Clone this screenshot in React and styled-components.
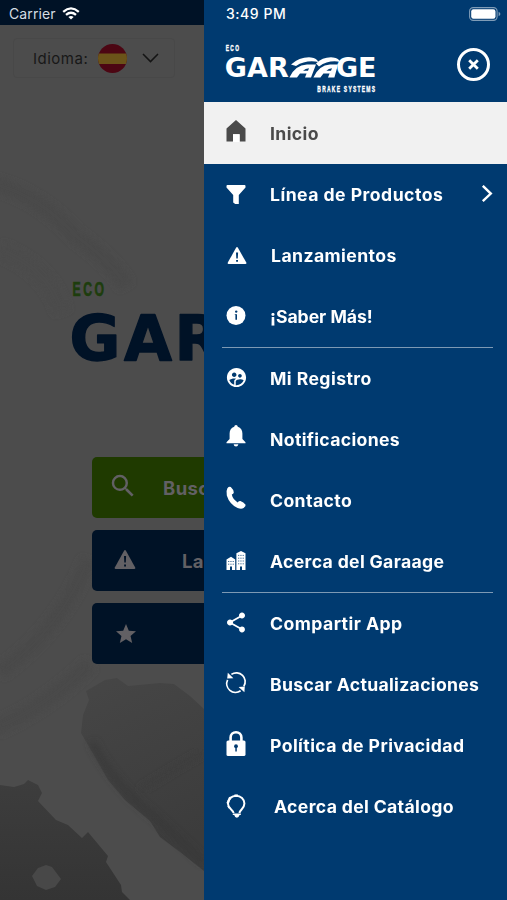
import React from 'react';
import styled, { createGlobalStyle } from 'styled-components';
import { MdSupervisedUserCircle, MdShare, MdSearch, MdStar } from 'react-icons/md';

const GlobalStyle = createGlobalStyle`
  * {
    box-sizing: border-box;
  }

  body {
    margin: 0;
    font-family: 'Inter', 'Open Sans', sans-serif;
  }
`;

const Screen = styled.div`
  position: relative;
  width: 507px;
  height: 900px;
  overflow: hidden;
  background: #4c4c4c;
`;

/* status bar */

const StatusBar = styled.div`
  position: absolute;
  top: 0;
  left: 0;
  z-index: 3;
  display: grid;
  grid-template-columns: 217px 1fr auto;
  align-items: center;
  width: 100%;
  height: 27px;
  padding: 0 6px 0 9px;
  color: #fff;
  font-size: 14px;
  font-weight: 500;
`;

const Carrier = styled.div`
  display: flex;
  align-items: center;
  gap: 6px;
  color: #d5dde3;
  font-weight: 400;
  letter-spacing: 0.1px;
`;

const Clock = styled.div`
  letter-spacing: 0.55px;
`;

/* dimmed home screen */

const Home = styled.div`
  position: relative;
  height: 100%;
  display: flex;
  flex-direction: column;
  width: 204px;
  overflow: hidden;
`;

const HomeTop = styled.div`
  height: 25px;
  flex: none;
  background: #001226;
`;

const Backdrop = styled.svg`
  position: absolute;
  top: 0;
  left: 0;
`;

const Language = styled.div`
  position: relative;
  display: flex;
  align-items: center;
  width: 162px;
  height: 40px;
  margin: 13px 0 0 13px;
  padding-left: 19px;
  border: 1px solid #484848;
  border-radius: 4px;
  color: #181818;
  font-size: 15px;
  letter-spacing: 0.5px;

  .flag {
    margin-left: 10px;
  }

  .chevron {
    margin-left: 15px;
  }
`;

const HomeLogo = styled.svg`
  position: relative;
  flex: none;
  margin: 200px 0 0 70px;
`;

const HomeButtons = styled.div`
  position: relative;
  display: flex;
  flex-direction: column;
  gap: 12px;
  width: 323px;
  margin: 83px 0 0 92px;
`;

const HomeButton = styled.div`
  display: flex;
  align-items: center;
  height: 61px;
  padding-left: ${props => props.pad || 21}px;
  border-radius: 5px;
  background: ${props => props.color};
  color: #626064;
  font-size: 18.5px;
  font-weight: 700;
  letter-spacing: 0.4px;

  svg {
    margin-bottom: ${props => props.lift || 0}px;
  }

  span {
    margin-left: ${props => props.gap}px;
  }
`;

/* drawer */

const Drawer = styled.div`
  position: absolute;
  top: 0;
  left: 204px;
  z-index: 2;
  width: 303px;
  height: 900px;
  background: #003a70;
`;

const DrawerHeader = styled.div`
  display: flex;
  justify-content: space-between;
  height: 102px;
  padding: 42px 17px 0 20px;

  svg {
    overflow: visible;
  }
`;

const CloseButton = styled.div`
  display: flex;
  align-items: center;
  justify-content: center;
  width: 33px;
  height: 33px;
  margin-top: 5.5px;
  border: 3px solid #fff;
  border-radius: 50%;
`;

const Item = styled.div`
  display: flex;
  align-items: center;
  height: ${props => (props.active ? 62 : 61)}px;
  padding: ${props => (props.active ? 1 : 0)}px 14px 0 20px;
  background: ${props => (props.active ? '#f1f1f1' : 'transparent')};
  color: ${props => (props.active ? '#4a4a4a' : '#fff')};
`;

const IconSlot = styled.div`
  display: flex;
  width: 24px;
  height: 36px;
  align-items: flex-start;
  justify-content: center;
  padding-top: ${props => props.top || 0}px;
`;

const Label = styled.div`
  flex: 1;
  margin-left: ${props => 22 + (props.shift || 0)}px;
  font-size: 16.8px;
  font-weight: 700;
  line-height: 24px;
  letter-spacing: ${props => props.tracking}px;
  white-space: nowrap;
  transform: scaleX(1.05);
  transform-origin: left center;
`;

const Divider = styled.div`
  height: 1px;
  margin: 0 14px 0 18px;
  background: #7d99b4;
`;

const Glyph = ({ children }) => (
  <svg width="24" height="36" viewBox="0 0 24 36" fill="currentColor">
    {children}
  </svg>
);

const HomeIcon = () => (
  <Glyph>
    <path d="M12 4 L21.5 12.5 V25.5 H15.6 V18.2 H9 V25.5 H2.5 V12.5 Z" />
    <path d="M9 18.2 H15.6 V26 H9 Z" fill="#fff" />
  </Glyph>
);

const FilterIcon = () => (
  <Glyph>
    <path d="M3.4 8 H20.6 Q21.5 8 21.5 9 V10.5 L14.8 18 V27 H11.2 L9.2 25.4 V18 L2.5 10.5 V9 Q2.5 8 3.4 8 Z" />
  </Glyph>
);

const WarningIcon = () => (
  <Glyph>
    <path d="M12.2 9.6 Q13 8.4 13.8 9.6 L22.3 24.6 Q22.8 26 21.4 26 H4.6 Q3.2 26 3.8 24.6 Z" />
    <path d="M12 14.4 H14.1 L13.8 20.6 H12.3 Z M12.1 22 H14 V23.8 H12.1 Z" fill="#003a70" />
  </Glyph>
);

const InfoIcon = () => (
  <Glyph>
    <circle cx="12" cy="16.5" r="9.5" />
    <circle cx="12.2" cy="12.6" r="1.2" fill="#003a70" />
    <path d="M10.8 15.2 H13 V20.8 H11.4 V16 H10.8 Z" fill="#003a70" />
  </Glyph>
);

const BellIcon = () => (
  <Glyph>
    <path d="M12 3 Q13.6 3 13.8 4.8 Q18.4 6.4 18.4 11.6 V17 L21.5 20.2 V21.2 H2.5 V20.2 L5.6 17 V11.6 Q5.6 6.4 10.2 4.8 Q10.4 3 12 3 Z" />
    <path d="M9.6 22.2 H14.4 Q14 24.4 12 24.4 Q10 24.4 9.6 22.2 Z" />
  </Glyph>
);

const PhoneIcon = () => (
  <Glyph>
    <path d="M3.4 5.2 Q5 3.2 6.8 4 Q9.6 6.6 9.8 9.4 Q9.6 10.8 7.8 11.6 Q8.6 16.2 13.6 19.4 Q15 17.8 16.4 18 Q19.6 19 21.6 21.8 Q22 23.4 19.6 25 Q17.4 26.4 13.6 25 Q5.4 21 2.8 12.4 Q1.8 8 3.4 5.2 Z" />
  </Glyph>
);

const BuildingsIcon = () => (
  <Glyph>
    <path d="M2.5 26 V15.5 L7 12.8 L11.2 15.5 V26 Z M12.4 26 V9.2 L17 7 L21.5 9.2 V26 Z" />
    <path
      d="M4 17.5 H10 M4 20.2 H10 M14 11.4 H20.2 M14 14.2 H20.2 M14 17 H20.2 M14 19.8 H20.2"
      stroke="#4a759c"
      strokeWidth="1"
      strokeDasharray="1.3 1"
    />
    <path d="M6 22.6 H8 V26 H6 Z M16 22.6 H18 V26 H16 Z" fill="#003a70" />
  </Glyph>
);

const SyncIcon = () => (
  <Glyph>
    <path
      d="M7.4 7.4 A8.8 8.8 0 0 1 19.8 19.4 M16.6 23.8 A8.8 8.8 0 0 1 3.6 12.8"
      fill="none"
      stroke="currentColor"
      strokeWidth="1.7"
    />
    <path d="M3.8 5.8 L9.4 11.2 L3.2 11.4 Z M20.4 25.2 L14.6 20 L20.8 19.6 Z" />
  </Glyph>
);

const LockIcon = () => (
  <Glyph>
    <path d="M6.6 14 V9.6 A5.4 5.4 0 0 1 17.4 9.6 V14" fill="none" stroke="currentColor" strokeWidth="2.6" />
    <rect x="2.5" y="12.4" width="19" height="15.6" rx="1.6" />
    <circle cx="12" cy="18.2" r="1.9" fill="#003a70" />
    <path d="M11.3 18 H12.8 V23.4 H11.3 Z" fill="#003a70" />
  </Glyph>
);

const BulbIcon = () => (
  <Glyph>
    <path
      d="M9.6 24 C9.2 20.6 3.9 19.8 3.9 14.6 A8.2 7.8 0 0 1 20.4 14.6 C20.4 19.8 16 20.6 15.4 24"
      fill="none"
      stroke="currentColor"
      strokeWidth="2"
    />
    <path d="M8.8 24.6 H16.8 V26 H15.6 Q14.6 28.8 12.9 28.8 Q11 28.8 10.2 26 H8.8 Z" />
    <path d="M5 8 L8.4 7.4 L6 11.4 L4.8 15 L2.4 14 L3.6 11.4 Z M10.4 5.6 H14 V8 H10.4 Z M3 17 L6 18.6 L5 19.8 Z" />
  </Glyph>
);

const CHEVRON = (
  <svg width="12" height="20" viewBox="0 0 12 20" fill="none" stroke="#fff" strokeWidth="2.4">
    <path d="M1.8 0.8 L9.8 8.6 L1.8 16.2" />
  </svg>
);

const sections = [
  [
    { label: 'Inicio', icon: <HomeIcon />, active: true, tracking: 0.37 },
    { label: 'Línea de Productos', icon: <FilterIcon />, tracking: 0.44, more: true },
    { label: 'Lanzamientos', icon: <WarningIcon />, tracking: 0.4, shift: 1 },
    { label: '¡Saber Más!', icon: <InfoIcon />, tracking: -0.04 },
  ],
  [
    { label: 'Mi Registro', icon: <MdSupervisedUserCircle size={23} />, top: 5.5, tracking: 0.41 },
    { label: 'Notificaciones', icon: <BellIcon />, tracking: 0.31 },
    { label: 'Contacto', icon: <PhoneIcon />, tracking: 0.37 },
    { label: 'Acerca del Garaage', icon: <BuildingsIcon />, tracking: 0.32 },
  ],
  [
    { label: 'Compartir App', icon: <MdShare size={25} />, top: 4.5, tracking: 0.42 },
    { label: 'Buscar Actualizaciones', icon: <SyncIcon />, tracking: 0.29 },
    { label: 'Política de Privacidad', icon: <LockIcon />, tracking: 0.4 },
    { label: 'Acerca del Catálogo', icon: <BulbIcon />, tracking: 0.33, shift: 3.5 },
  ],
];

const BrandLogo = () => (
  <svg width="154" height="52" viewBox="224 42 154 52" fill="#fff" fontFamily="'DejaVu Sans', sans-serif" fontWeight="700">
    <g fontFamily="'Liberation Sans', sans-serif" stroke="#fff" strokeWidth="0.4">
      <text transform="translate(225.7 50.8) scale(0.55 1)" fontSize="8.8" letterSpacing="2.6">ECO</text>
      <text transform="translate(317.3 91.6) scale(0.55 1)" fontSize="9" letterSpacing="2.3">BRAKE SYSTEMS</text>
    </g>
    <text x="224.8 247 268" y="77.4" fontSize="27">GAR</text>
    <text x="336 358" y="77.4" fontSize="27">GE</text>
    {/* the two car silhouettes between the letters */}
    <path d="M291 64.5 Q300 56.6 311 57.4 Q317 58.2 318.4 62 Q306 59.6 296 66 Z" />
    <path d="M289.4 77.4 Q295 65 307 64.4 H316 L311 77.4 H305 L306.6 73.6 H300 L297 77.4 Z" />
    <path d="M316 63.4 Q323 56.6 333 57.4 Q339 58.2 340.4 62 Q329 59.6 319 66.4 Z" />
    <path d="M313.4 77.4 Q319 65 330 64.4 H338 L334.4 77.4 H328 L329.6 73.6 H323.4 L320.4 77.4 Z" />
    <path d="M303 70.8 Q305.4 68.2 309 68.2 L308 70.8 Z M326.4 70.8 Q328.6 68.2 332 68.2 L331 70.8 Z" fill="#003a70" />
  </svg>
);

const HomeBackdrop = () => (
  <Backdrop width="204" height="900" viewBox="0 0 204 900">
    <defs>
      <linearGradient id="pad" x1="0" y1="0" x2="0.3" y2="1">
        <stop offset="0" stopColor="#464646" />
        <stop offset="1" stopColor="#3c3c3c" />
      </linearGradient>
      <linearGradient id="disc" x1="0" y1="0" x2="0" y2="1">
        <stop offset="0" stopColor="#3d3d3d" />
        <stop offset="1" stopColor="#343434" />
      </linearGradient>
      <filter id="soft"><feGaussianBlur stdDeviation="3" /></filter>
    </defs>
    <g fill="none" filter="url(#soft)">
      <path d="M-6 184 Q40 196 76 236 Q112 262 126 286" stroke="#484848" strokeWidth="15" />
      <path d="M0 250 Q48 268 62 312" stroke="#4b4b4b" strokeWidth="16" />
      <path d="M-4 728 Q44 708 90 664" stroke="#494949" strokeWidth="15" />
      <path d="M0 672 Q60 630 88 560" stroke="#4a4a4a" strokeWidth="14" />
    </g>
    <path
      d="M86 691 L105 680 L117 678 L128 686 L160 683 L174 684 L190 696 L204 709 V871 L180 852 L160 837 L150 821 L125 800 L108 780 L95 757 L81 733 L83 715 L89 700 Z"
      fill="url(#pad)"
    />
    <path d="M92 742 Q114 785 154 816 L204 862" fill="none" stroke="#383838" strokeWidth="8" opacity="0.6" filter="url(#soft)" />
    <path d="M140 790 Q180 765 204 752" fill="none" stroke="#3c3c3c" strokeWidth="5" filter="url(#soft)" />
    <path
      d="M0 785 L14 787 L24 784 L28 780 L38 785 L42 793 L38 801 L56 820 L68 825 L82 838 L88 832 L108 856 L106 862 L121 885 L122 892 L130 900 H0 Z"
      fill="url(#disc)"
    />
    <path d="M38 868 L46 865 L52 867 L61 879 L55 887 L46 890 L37 886 L32 876 Z" fill="#484848" />
  </Backdrop>
);

const HomeScreen = () => (
  <Home>
    <HomeBackdrop />
    <HomeTop />
    <Language>
      Idioma:
      <svg className="flag" width="29" height="29" viewBox="0 0 29 29">
        <clipPath id="round"><circle cx="14.5" cy="14.5" r="14.5" /></clipPath>
        <g clipPath="url(#round)">
          <path fill="#4c0613" d="M0 0 H29 V29 H0 Z" />
          <path fill="#6b5319" d="M0 9.5 H29 V20 H0 Z" />
        </g>
      </svg>
      <svg className="chevron" width="17" height="10" viewBox="0 0 17 10" fill="none" stroke="#141414" strokeWidth="1.5">
        <path d="M1 1 L8.5 8.6 L16 1" />
      </svg>
    </Language>
    <HomeLogo width="134" height="96" viewBox="70 278 134 96" fontWeight="700">
      <text
        transform="translate(72.6 296.2) scale(0.6 1)"
        fontSize="20.5"
        letterSpacing="4"
        fill="#1d3d0d"
        stroke="#1d3d0d"
        strokeWidth="0.6"
        fontFamily="'Liberation Sans', sans-serif"
      >
        ECO
      </text>
      <text
        x="69.5 124 174.5"
        y="359.5"
        fontSize="62"
        fill="#001226"
        stroke="#001226"
        strokeWidth="1.4"
        strokeLinejoin="round"
        fontFamily="'DejaVu Sans', sans-serif"
      >
        GAR
      </text>
    </HomeLogo>
    <HomeButtons>
      <HomeButton color="#1f3a00" pad={16} gap={25} lift={4}>
        <MdSearch size={30} />
        <span>Busc</span>
      </HomeButton>
      <HomeButton color="#001226" gap={45} lift={2}>
        <svg width="24" height="36" viewBox="1 0 24 36" fill="currentColor">
          <path d="M12.2 8.6 Q13 7.4 13.8 8.6 L23.2 25.6 Q23.8 27 22.4 27 H3.6 Q2.2 27 2.8 25.6 Z" />
          <path d="M12 14 H14.1 L13.8 20.6 H12.3 Z M12.1 22.4 H14 V24.4 H12.1 Z" fill="#001226" />
        </svg>
        <span>La</span>
      </HomeButton>
      <HomeButton color="#001226" pad={22}>
        <MdStar size={24} />
      </HomeButton>
    </HomeButtons>
  </Home>
);

const Menu = () => (
  <Drawer>
    <DrawerHeader>
      <BrandLogo />
      <CloseButton>
        <svg width="11" height="11" viewBox="0 0 11 11" stroke="#fff" strokeWidth="2.8">
          <path d="M1.2 1.2 L9.8 9.8 M9.8 1.2 L1.2 9.8" />
        </svg>
      </CloseButton>
    </DrawerHeader>
    {sections.map((items, i) => (
      <React.Fragment key={i}>
        {i > 0 && <Divider />}
        {items.map(item => (
          <Item key={item.label} active={item.active}>
            <IconSlot top={item.top}>{item.icon}</IconSlot>
            <Label tracking={item.tracking} shift={item.shift}>{item.label}</Label>
            {item.more && CHEVRON}
          </Item>
        ))}
      </React.Fragment>
    ))}
  </Drawer>
);

const App = () => (
  <Screen>
    <GlobalStyle />
    <StatusBar>
      <Carrier>
        Carrier
        <svg width="18" height="13" viewBox="0 0 18 13" fill="none" stroke="#fff" strokeWidth="2.3">
          <path d="M1.2 4.8 Q9 -2 16.8 4.8 M4 7.8 Q9 3.6 14 7.8" />
          <path d="M9 12.6 L6.4 9.9 Q9 8 11.6 9.9 Z" fill="#fff" stroke="none" />
        </svg>
      </Carrier>
      <Clock>3:49 PM</Clock>
      <svg width="32" height="14" viewBox="0 0 32 14">
        <rect x="0.6" y="0.6" width="27.5" height="12.8" rx="3.6" fill="none" stroke="#7f9cb7" strokeWidth="1.1" />
        <rect x="2.2" y="2.2" width="24.3" height="9.6" rx="2.2" fill="#fff" />
        <path d="M29.6 4.8 Q31.4 5.6 31.4 7 Q31.4 8.4 29.6 9.2 Z" fill="#7f9cb7" />
      </svg>
    </StatusBar>
    <HomeScreen />
    <Menu />
  </Screen>
);

export default App;
